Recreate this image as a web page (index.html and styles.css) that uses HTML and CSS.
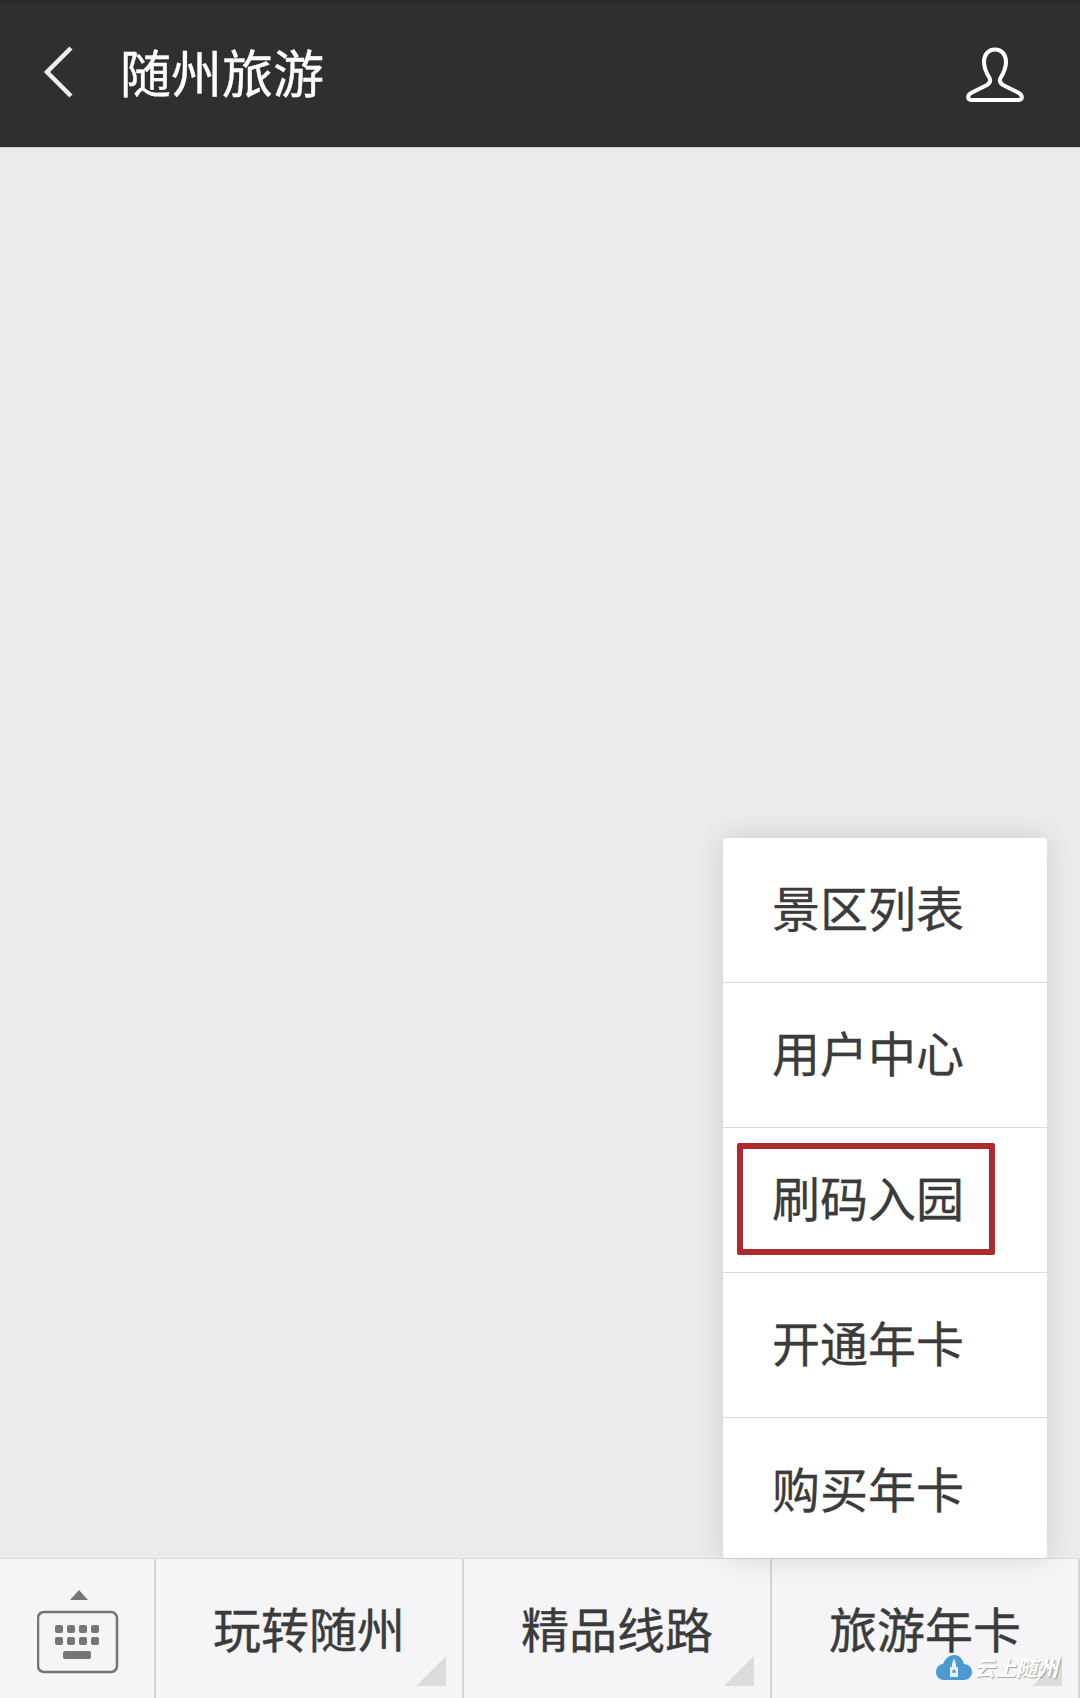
FILE: index.html
```html
<!DOCTYPE html>
<html lang="zh-CN">
<head>
<meta charset="utf-8">
<title>随州旅游</title>
<link rel="stylesheet" href="styles.css">
</head>
<body>
<div class="page">
  <header class="topbar">
    <svg class="back" width="40" height="60" viewBox="0 0 40 60"><path d="M31 4 L7 28 L31 52" fill="none" stroke="#ececec" stroke-width="4.5"/></svg>
    <h1 class="title">随州旅游</h1>
    <svg class="user" width="62" height="60" viewBox="965 46 62 60"><path d="M996 49.5C1003 49.5 1007 55 1007 62C1007 69 1004 74 1001.5 78C1000 81 1001 83 1004 85L1020 93C1023.5 95 1024 100 1020 100H972C968 100 968.5 95 972 93L988 85C991 83 992 81 990.5 78C988 74 985 69 985 62C985 55 989 49.5 996 49.5Z" fill="none" stroke="#fff" stroke-width="4" stroke-linejoin="round"/></svg>
  </header>
  <main class="content">
    <ul class="menu">
      <li class="menu-item">景区列表</li>
      <li class="menu-item">用户中心</li>
      <li class="menu-item">刷码入园<span class="highlight"></span></li>
      <li class="menu-item">开通年卡</li>
      <li class="menu-item menu-last">购买年卡</li>
    </ul>
  </main>
  <nav class="tabbar">
    <div class="kbd-tab">
      <svg width="84" height="86" viewBox="0 0 84 86"><path d="M33 10H51L42 0Z" fill="#757575"/><rect x="1" y="22" width="79" height="60" rx="6" fill="none" stroke="#757575" stroke-width="2.5"/><g fill="#757575"><rect x="18" y="35" width="8" height="8" rx="2"/><rect x="30" y="35" width="8" height="8" rx="2"/><rect x="42" y="35" width="8" height="8" rx="2"/><rect x="54" y="35" width="8" height="8" rx="2"/><rect x="18" y="47" width="8" height="8" rx="2"/><rect x="30" y="47" width="8" height="8" rx="2"/><rect x="42" y="47" width="8" height="8" rx="2"/><rect x="54" y="47" width="8" height="8" rx="2"/><rect x="26" y="61" width="28" height="8" rx="2"/></g></svg>
    </div>
    <div class="tab">玩转随州<span class="corner"></span></div>
    <div class="tab">精品线路<span class="corner"></span></div>
    <div class="tab">旅游年卡<span class="corner"></span></div>
    <div class="watermark">
      <svg width="36" height="25" viewBox="0 0 36 25"><path d="M8 25C3 25 0 21 0 17C0 12 4 9 7 9C9 4 13 0 18 0C24 0 27 5 28 9C33 9 36 13 36 17C36 21 33 25 28 25Z" fill="#4c9ad2"/><path d="M18 3L20 9V12H22V22H14V12H16V9Z" fill="#e8f1f8"/><rect x="16.500" y="15" width="3" height="3" fill="#4c9ad2"/></svg>
      <span class="wm-text">云上随州</span>
    </div>
  </nav>
</div>
</body>
</html>
```

FILE: styles.css
```css
* { box-sizing: border-box; }
html, body { margin: 0; padding: 0; }
body { font-family: "Noto Sans CJK SC", "Noto Sans", sans-serif; background: #ebebeb; }
.page { width: 1080px; height: 1698px; display: flex; flex-direction: column; overflow: hidden; }

.topbar { height: 148px; flex: none; display: flex; align-items: center; padding: 0 54px 0 40px; background: linear-gradient(#262626, #2f2f2f 5px); border-bottom: 1px solid #c9c9c9; }
.back { flex: none; }
.title { margin: 0 0 5px 40px; flex: 1; font-size: 51px; font-weight: 400; color: #fff; line-height: 1; -webkit-text-stroke: .4px #fff; }
.user { flex: none; margin-top: 4px; }

.content { flex: 1; position: relative; background: #ebebeb; }
.menu { position: absolute; right: 33px; bottom: 0; width: 324px; margin: 0; padding: 0; list-style: none; background: #fff; border-radius: 3px; box-shadow: 0 0 28px rgba(0,0,0,.13); z-index: 2; }
.menu-item { position: relative; height: 145px; padding: 0 0 8px 49px; display: flex; align-items: center; font-size: 48px; color: #3b3b3b; border-bottom: 1px solid #dadada; line-height: 1; -webkit-text-stroke: .3px #3b3b3b; }
.menu-last { height: 140px; border-bottom: 0; padding-bottom: 2px; }
.highlight { position: absolute; left: 14px; top: 15px; width: 258px; height: 112px; border: 6px solid #ad2a2e; border-radius: 2px; }

.tabbar { position: relative; height: 140px; flex: none; display: flex; background: #f5f5f7; border-top: 1px solid #d8d8d8; }
.kbd-tab { width: 156px; flex: none; display: flex; justify-content: center; align-items: flex-start; padding: 31px 0 0 4px; border-right: 2px solid #d5d5d5; }
.tab { position: relative; flex: 1; display: flex; justify-content: center; align-items: center; padding-bottom: 4px; font-size: 48px; color: #3b3b3b; border-right: 2px solid #d5d5d5; line-height: 1; -webkit-text-stroke: .4px #3b3b3b; }
.tab:last-of-type { border-right: 0; }
.corner { position: absolute; right: 16px; bottom: 12px; width: 30px; height: 30px; background: #dcdcdc; clip-path: polygon(100% 0, 100% 100%, 0 100%); }
.watermark { position: absolute; left: 936px; top: 96px; display: flex; align-items: center; gap: 2px; z-index: 3; }
.wm-text { font-size: 21px; font-style: italic; font-weight: 700; color: #fff; line-height: 1; text-shadow: 1px 1px 1px rgba(90,90,90,.55); }
```
